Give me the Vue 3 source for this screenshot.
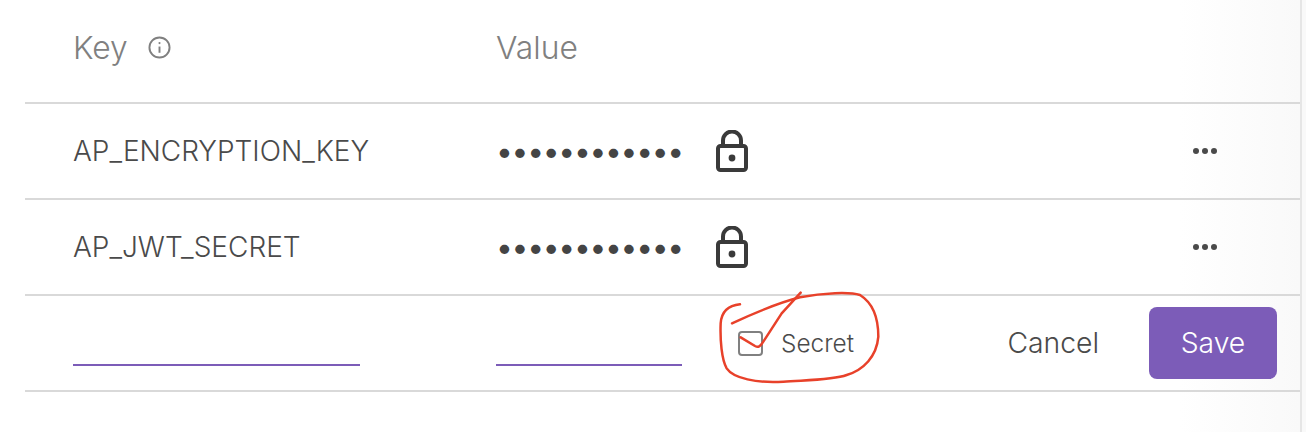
<template>
  <div class="page">
    <div class="table">
      <div class="row head">
        <div class="col-key">
          Key
          <svg class="info" viewBox="0 0 24 24" fill="none" stroke="currentColor" stroke-width="2">
            <circle cx="12" cy="12" r="10.5" />
            <path d="M12 11v6.5" />
            <circle cx="12" cy="7.4" r="1.1" fill="currentColor" stroke="none" />
          </svg>
        </div>
        <div class="col-value">Value</div>
      </div>

      <div v-for="item in secrets" :key="item" class="row">
        <div class="col-key">{{ item }}</div>
        <div class="col-value masked">
          <span class="dots">••••••••••••</span>
          <svg class="lock" viewBox="0 0 32 42" fill="none" stroke="currentColor" stroke-width="4">
            <rect x="2" y="16" width="28" height="24" rx="2.5" />
            <path d="M7 15V10.5a9 9 0 0 1 18 0V15" />
            <circle cx="16" cy="28" r="3.4" fill="currentColor" stroke="none" />
          </svg>
        </div>
        <svg class="more" viewBox="0 0 24 6" fill="currentColor">
          <circle cx="3" cy="3" r="3" />
          <circle cx="12" cy="3" r="3" />
          <circle cx="21" cy="3" r="3" />
        </svg>
      </div>

      <div class="row edit">
        <div class="col-key"><div class="field key-field"></div></div>
        <div class="col-value"><div class="field value-field"></div></div>
        <label class="secret">
          <span class="box"></span>
          Secret
        </label>
        <span class="cancel">Cancel</span>
        <button class="save">Save</button>
      </div>
    </div>

    <!-- marker scribble over the checkbox -->
    <svg class="scribble" viewBox="0 0 600 330" fill="none" stroke="#e8412a" stroke-width="7.5" stroke-linecap="round" stroke-linejoin="round">
      <path d="M120 73C90 76 65 90 62 130C60 180 65 240 80 265C100 295 170 310 250 305C320 300 400 300 440 285C490 270 530 230 535 170C535 120 520 70 480 45C450 35 370 38 300 52C230 70 150 105 96 130" />
      <path d="M122 172L165 198C175 203 180 200 190 185L245 100L302 38" />
    </svg>
  </div>
</template>

<script setup>
const secrets = ['AP_ENCRYPTION_KEY', 'AP_JWT_SECRET']
</script>

<style>
html, body {
  background: #fff;
}
</style>

<style scoped>
.page {
  position: relative;
  width: 1306px;
  height: 432px;
  overflow: hidden;
  font-family: Inter, "Liberation Sans", sans-serif;
  color: #4a4a4a;
  background: linear-gradient(90deg, #fff 1180px, #f9f9f9 1300px, #f9f9f9);
}

.table {
  width: 1275px;
  height: 426px;
  margin-left: 25px;
  padding-top: 6px;
  border-right: 2px solid #e6e6e6;
}

.row {
  display: flex;
  align-items: center;
  height: 94px;
  padding: 0 23px 0 48px;
  border-bottom: 2px solid #d9d9d9;
  font-size: 28px;
  font-weight: 300;
}

.head {
  color: #808080;
  font-size: 31.8px;
  padding-bottom: 14px;
  height: 82px;
}

.col-key {
  display: flex;
  align-items: center;
  width: 423px;
  flex: none;
}

.col-value {
  display: flex;
  align-items: center;
  width: 220px;
  flex: none;
}

.info {
  width: 23px;
  height: 23px;
  margin-left: 20px;
}

.masked {
  color: #444;
}

.dots {
  width: 219px;
  flex: none;
  font-size: 30px;
  font-weight: 400;
  letter-spacing: -1.3px;
}

.lock {
  width: 32px;
  height: 42px;
  flex: none;
  color: #3a3a3a;
  margin-left: 1px;
}

.more {
  width: 24px;
  height: 6px;
  margin-left: auto;
  margin-right: 60px;
}

.field {
  height: 2px;
  background: #7c5cb8;
  margin-top: 44px;
}

.key-field {
  width: 287px;
}

.value-field {
  width: 186px;
}

.secret {
  display: flex;
  align-items: center;
  gap: 18px;
  font-size: 24.4px;
  margin-left: 22px;
}

.box {
  width: 25px;
  height: 25px;
  box-sizing: border-box;
  border: 2.5px solid #808080;
  border-radius: 4px;
}

.cancel {
  margin-left: auto;
  margin-right: 50px;
  font-size: 28.3px;
}

.save {
  width: 128px;
  height: 72px;
  border: 0;
  border-radius: 8px;
  background: #7c5cb8;
  color: #fff;
  font: inherit;
  font-size: 28.3px;
}

.scribble {
  position: absolute;
  left: 700px;
  top: 280px;
  width: 200px;
  height: 110px;
}
</style>
